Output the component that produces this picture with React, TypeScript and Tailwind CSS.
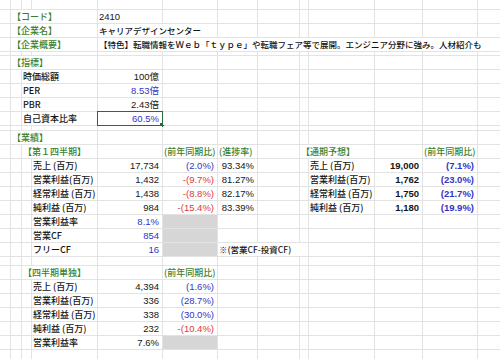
import React from "react";

type Cell = {
  at: number;
  s?: number;
  t?: string;
  r?: boolean;
  c?: "g" | "b" | "x";
  bold?: boolean;
  gray?: boolean;
  sel?: boolean;
  num?: boolean;
  small?: boolean;
};

type Row = { h: number; cells: Cell[] };

const COLS = 13;

const spanCls: Record<number, string> = {
  1: "",
  2: "col-span-2",
  3: "col-span-3",
  4: "col-span-4",
  9: "col-span-9",
};

const hCls: Record<number, string> = {
  3: "h-[3px]",
  4: "h-[4px]",
  8: "h-[8px]",
  9: "h-[9px]",
  13: "h-[13px]",
  20: "h-[20px]",
};

const colorCls = {
  g: "text-[#3b7f2e]",
  b: "text-[#3434c4]",
  x: "text-[#d93a3a]",
};

const H = (at: number, t: string, s = 3): Cell => ({ at, s, t, c: "g" });

const rows: Row[] = [
  { h: 9, cells: [] },
  { h: 13, cells: [H(2, "【コード】"), { at: 5, t: "2410", num: true }] },
  { h: 13, cells: [H(2, "【企業名】"), { at: 5, s: 2, t: "キャリアデザインセンター", small: true }] },
  {
    h: 13,
    cells: [
      H(2, "【企業概要】"),
      {
        at: 5,
        s: 9,
        small: true,
        t: "【特色】転職情報をＷｅｂ「ｔｙｐｅ」や転職フェア等で展開。エンジニア分野に強み。人材紹介も",
      },
    ],
  },
  { h: 3, cells: [] },
  { h: 13, cells: [H(2, "【指標】")] },
  { h: 13, cells: [{ at: 3, s: 2, t: "時価総額" }, { at: 5, t: "100億", r: true }] },
  { h: 13, cells: [{ at: 3, s: 2, t: "PER" }, { at: 5, t: "8.53倍", r: true, c: "b" }] },
  { h: 13, cells: [{ at: 3, s: 2, t: "PBR" }, { at: 5, t: "2.43倍", r: true }] },
  { h: 13, cells: [{ at: 3, s: 2, t: "自己資本比率" }, { at: 5, t: "60.5%", r: true, c: "b", sel: true }] },
  { h: 4, cells: [] },
  { h: 13, cells: [H(2, "【業績】")] },
  {
    h: 13,
    cells: [
      H(3, "【第１四半期】", 2),
      { at: 6, t: "(前年同期比)", c: "g" },
      { at: 7, t: "(進捗率)", c: "g" },
      H(9, "【通期予想】", 2),
      { at: 12, t: "(前年同期比)", c: "g" },
    ],
  },
  {
    h: 13,
    cells: [
      { at: 4, t: "売上 (百万)" },
      { at: 5, t: "17,734", r: true },
      { at: 6, t: "(2.0%)", r: true, c: "b" },
      { at: 7, t: "93.34%", r: true },
      { at: 10, t: "売上 (百万)" },
      { at: 11, t: "19,000", r: true, bold: true },
      { at: 12, t: "(7.1%)", r: true, c: "b", bold: true },
    ],
  },
  {
    h: 13,
    cells: [
      { at: 4, t: "営業利益(百万)" },
      { at: 5, t: "1,432", r: true },
      { at: 6, t: "-(9.7%)", r: true, c: "x" },
      { at: 7, t: "81.27%", r: true },
      { at: 10, t: "営業利益(百万)" },
      { at: 11, t: "1,762", r: true, bold: true },
      { at: 12, t: "(23.0%)", r: true, c: "b", bold: true },
    ],
  },
  {
    h: 13,
    cells: [
      { at: 4, t: "経常利益 (百万)" },
      { at: 5, t: "1,438", r: true },
      { at: 6, t: "-(8.8%)", r: true, c: "x" },
      { at: 7, t: "82.17%", r: true },
      { at: 10, t: "経常利益 (百万)" },
      { at: 11, t: "1,750", r: true, bold: true },
      { at: 12, t: "(21.7%)", r: true, c: "b", bold: true },
    ],
  },
  {
    h: 13,
    cells: [
      { at: 4, t: "純利益 (百万)" },
      { at: 5, t: "984", r: true },
      { at: 6, t: "-(15.4%)", r: true, c: "x" },
      { at: 7, t: "83.39%", r: true },
      { at: 10, t: "純利益 (百万)" },
      { at: 11, t: "1,180", r: true, bold: true },
      { at: 12, t: "(19.9%)", r: true, c: "b", bold: true },
    ],
  },
  {
    h: 13,
    cells: [{ at: 4, t: "営業利益率" }, { at: 5, t: "8.1%", r: true, c: "b" }, { at: 6, gray: true }],
  },
  {
    h: 13,
    cells: [{ at: 4, t: "営業CF" }, { at: 5, t: "854", r: true, c: "b" }, { at: 6, gray: true }],
  },
  {
    h: 13,
    cells: [
      { at: 4, t: "フリーCF" },
      { at: 5, t: "16", r: true, c: "b" },
      { at: 6, gray: true },
      { at: 7, s: 3, t: "※(営業CF-投資CF)", small: true },
    ],
  },
  { h: 8, cells: [] },
  { h: 13, cells: [H(3, "【四半期単独】", 2), { at: 6, t: "(前年同期比)", c: "g" }] },
  {
    h: 13,
    cells: [
      { at: 4, t: "売上 (百万)" },
      { at: 5, t: "4,394", r: true },
      { at: 6, t: "(1.6%)", r: true, c: "b" },
    ],
  },
  {
    h: 13,
    cells: [
      { at: 4, t: "営業利益(百万)" },
      { at: 5, t: "336", r: true },
      { at: 6, t: "(28.7%)", r: true, c: "b" },
    ],
  },
  {
    h: 13,
    cells: [
      { at: 4, t: "経常利益 (百万)" },
      { at: 5, t: "338", r: true },
      { at: 6, t: "(30.0%)", r: true, c: "b" },
    ],
  },
  {
    h: 13,
    cells: [
      { at: 4, t: "純利益 (百万)" },
      { at: 5, t: "232", r: true },
      { at: 6, t: "-(10.4%)", r: true, c: "x" },
    ],
  },
  {
    h: 13,
    cells: [{ at: 4, t: "営業利益率" }, { at: 5, t: "7.6%", r: true }, { at: 6, gray: true }],
  },
  { h: 20, cells: [] },
];

// fill the empty columns so every grid slot gets a white cell
const fill = (cells: Cell[]): Cell[] => {
  const out: Cell[] = [];
  let col = 1;
  const sorted = [...cells].sort((a, b) => a.at - b.at);
  for (const c of sorted) {
    while (col < c.at) out.push({ at: col++ });
    out.push(c);
    col += c.s ?? 1;
  }
  while (col <= COLS) out.push({ at: col++ });
  return out;
};

const SheetCell = ({ cell }: { cell: Cell }) => {
  const numeric = cell.r || cell.num;
  return (
    <div
      className={[
        "relative whitespace-nowrap leading-[13px]",
        spanCls[cell.s ?? 1],
        numeric
          ? "text-[9.5px] font-['Liberation_Sans','Noto_Sans_CJK_JP',sans-serif]"
          : "font-medium font-['Noto_Sans_CJK_JP',sans-serif]",
        !numeric && (cell.small ? "text-[8.5px]" : "text-[9px]"),
        cell.gray ? "bg-[#d6d6d6]" : "bg-white",
        cell.r ? "text-right pr-[3px]" : "pl-[1px]",
        cell.c ? colorCls[cell.c] : "text-[#151515]",
        cell.bold ? "font-bold" : "",
        cell.sel ? "" : "overflow-hidden",
      ]
        .filter(Boolean)
        .join(" ")}
    >
      {cell.t}
      {cell.sel && (
        <>
          <div className="absolute -inset-px border-[1.5px] border-[#2a6a3a]" />
          <div className="absolute -right-[2px] -bottom-[2px] w-[4px] h-[4px] bg-[#2a6a3a]" />
        </>
      )}
    </div>
  );
};

export default function App() {
  return (
    <div className="w-[500px] h-[359px] overflow-hidden bg-[#e3e3e3] flex flex-col gap-px">
      {rows.map((row, i) => (
        <div
          key={i}
          className={`grid shrink-0 gap-px grid-cols-[10px_10px_9px_65px_64px_54px_39px_41px_8px_65px_47px_54px_1fr] ${hCls[row.h]}`}
        >
          {fill(row.cells).map((cell) => (
            <SheetCell key={cell.at} cell={cell} />
          ))}
        </div>
      ))}
    </div>
  );
}
